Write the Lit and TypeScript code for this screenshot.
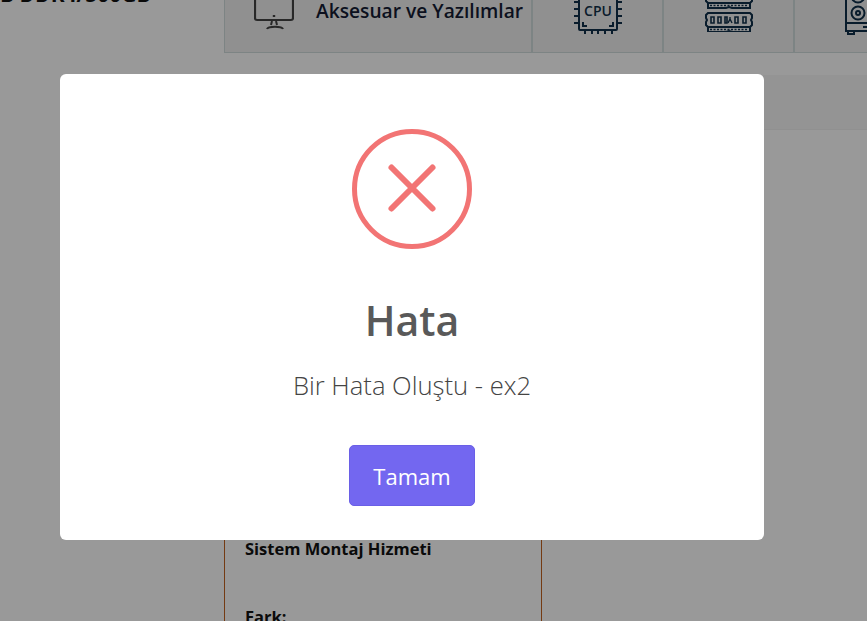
import { LitElement, html, svg, css } from 'lit';
import { customElement } from 'lit/decorators.js';

// Error dialog over a dimmed product page, which is scrolled a little past its top
@customElement('app-root')
export class AppRoot extends LitElement {
  static styles = css`
    :host {
      display: block;
      font-family: 'Open Sans', 'Noto Sans', sans-serif;
    }
    .scene {
      position: relative;
      height: 621px;
      overflow: hidden;
      background: #fff;
    }
    .page {
      display: grid;
      grid-template-columns: 224px 1fr;
      margin-top: -32px;
    }
    .side-title {
      margin: 14px 0 0;
      font-size: 21px;
      line-height: 24px;
      font-weight: 700;
      color: #111;
      white-space: nowrap;
      overflow: hidden;
    }
    .tabs {
      display: flex;
      height: 84px;
      border: 1px solid #d0dcdc;
      border-top: none;
      background: #f0f0f0;
      overflow: hidden;
    }
    .tab {
      flex: 0 0 131px;
      box-sizing: border-box;
      display: flex;
      align-items: center;
      justify-content: center;
      border-right: 2px solid #d0dcdc;
      color: #10304a;
    }
    .tab.wide {
      flex-basis: 308px;
      justify-content: flex-start;
      gap: 22px;
      padding-left: 29px;
      font-size: 19.2px;
      font-weight: 600;
      color: #141c34;
      white-space: nowrap;
    }
    .tab.case {
      justify-content: flex-start;
      padding-left: 50px;
    }
    .band {
      height: 54px;
      margin-top: 22px;
      background: #f7f7f7;
      border-bottom: 1px solid #f0f0f0;
    }
    .panel {
      box-sizing: border-box;
      width: 318px;
      height: 520px;
      padding: 408px 20px 0;
      border-left: 1px solid #c2621f;
      border-right: 1px solid #c2621f;
      font-size: 16.5px;
      line-height: 22px;
      font-weight: 700;
      color: #111;
    }
    .panel p {
      margin: 0 0 46px;
    }
    .overlay {
      position: absolute;
      inset: 0;
      display: flex;
      align-items: center;
      justify-content: center;
      padding: 0 43px 7px 0;
      background: rgba(0, 0, 0, 0.4);
    }
    .modal {
      box-sizing: border-box;
      width: 704px;
      height: 466px;
      padding-top: 55px;
      display: flex;
      flex-direction: column;
      align-items: center;
      background: #fff;
      border-radius: 6px;
    }
    .icon {
      display: block;
    }
    .modal h2 {
      margin: 44px 0 0;
      font-size: 41px;
      line-height: 54px;
      font-weight: 600;
      color: #595959;
    }
    .modal .message {
      margin: 23px 0 0;
      font-size: 25.6px;
      line-height: 32px;
      font-weight: 300;
      color: #444;
    }
    .modal button {
      box-sizing: border-box;
      width: 126px;
      height: 61px;
      margin-top: 43px;
      border: 1px solid #6a5fe6;
      border-radius: 5px;
      background: #7367f0;
      color: #fff;
      font-family: inherit;
      font-size: 22px;
    }
    svg {
      fill: none;
      stroke: currentColor;
      stroke-width: 2;
      flex: none;
    }
    svg text {
      fill: currentColor;
      stroke: none;
      font-family: 'Open Sans', sans-serif;
      font-weight: 600;
      font-size: 14px;
    }
  `;

  private monitorIcon() {
    return html`<svg width="40" height="40" viewBox="0 0 40 40" style="color:#444">
      <path d="M1 0v28a2 2 0 0 0 2 2h34a2 2 0 0 0 2-2V0" stroke-width="2.2" />
      <path d="M20 25v2" stroke-width="2.4" />
      <path d="M18 31l-1 4M22 31l1 4M13 39c1-3 15-3 16 0" stroke-width="2" />
    </svg>`;
  }

  private cpuIcon() {
    return html`<svg width="48" height="48" viewBox="0 0 48 48">
      <rect x="5" y="1" width="38" height="43" rx="1" />
      <path d="M0 16h5M0 23h5M0 30h5M0 37h5M43 16h5M43 23h5M43 30h5M43 37h5M11 44v4M18 44v4M24 44v4M31 44v4M38 44v4" />
      <path d="M9 36v4h4M39 36v4h-4" />
      <text x="24" y="30" text-anchor="middle">CPU</text>
    </svg>`;
  }

  private ramModule(y: number) {
    return svg`<g transform="translate(0 ${y})">
      <path d="M3 1h42l2 2v3l-1 2 1 2v3l-2 2H3l-2-2v-3l1-2-1-2V3z" />
      <path d="M3 15v5h18l3-1 3 1h18v-5" />
      <path d="M5 17.500h38" stroke-width="1.500" stroke-dasharray="2 1.500" />
      <path d="M6 5h3v6H6zM13 5h3v6h-3zM20 5h2v6h-2zM30 5h3v6h-3zM38 5h3v6h-3z" stroke-width="1.600" />
      <path d="M25 5v2l-2 4M25 7l2 4" stroke-width="1.400" />
    </g>`;
  }

  private ramIcon() {
    return html`<svg width="48" height="44" viewBox="0 0 48 44">
      ${this.ramModule(0)} ${this.ramModule(24)}
    </svg>`;
  }

  private caseIcon() {
    return html`<svg width="50" height="50" viewBox="0 0 50 50">
      <path d="M1 0v46h49M1 38h49" />
      <circle cx="13" cy="28" r="6.500" />
      <circle cx="13" cy="28" r="2" />
      <circle cx="13" cy="11" r="6.500" />
      <path d="M3 46v3h6v-3M18 42h12" />
    </svg>`;
  }

  render() {
    return html`
      <div class="scene">
        <div class="page">
          <h1 class="side-title">B DDR4/500GB</h1>
          <div>
            <div class="tabs">
              <div class="tab wide">${this.monitorIcon()}<span>Aksesuar ve Yazılımlar</span></div>
              <div class="tab">${this.cpuIcon()}</div>
              <div class="tab">${this.ramIcon()}</div>
              <div class="tab case">${this.caseIcon()}</div>
            </div>
            <div class="band"></div>
            <div class="panel">
              <p>Sistem Montaj Hizmeti</p>
              <p>Fark:</p>
            </div>
          </div>
        </div>
        <div class="overlay">
          <div class="modal" role="dialog" aria-labelledby="title">
            <svg class="icon" width="120" height="120" viewBox="0 0 120 120" style="color:#f27474">
              <circle cx="60" cy="60" r="57.500" stroke-width="5" />
              <path d="M39.500 38.500l41 41M80.500 38.500l-41 41" stroke-width="6" stroke-linecap="round" />
            </svg>
            <h2 id="title">Hata</h2>
            <p class="message">Bir Hata Oluştu - ex2</p>
            <button>Tamam</button>
          </div>
        </div>
      </div>
    `;
  }
}
